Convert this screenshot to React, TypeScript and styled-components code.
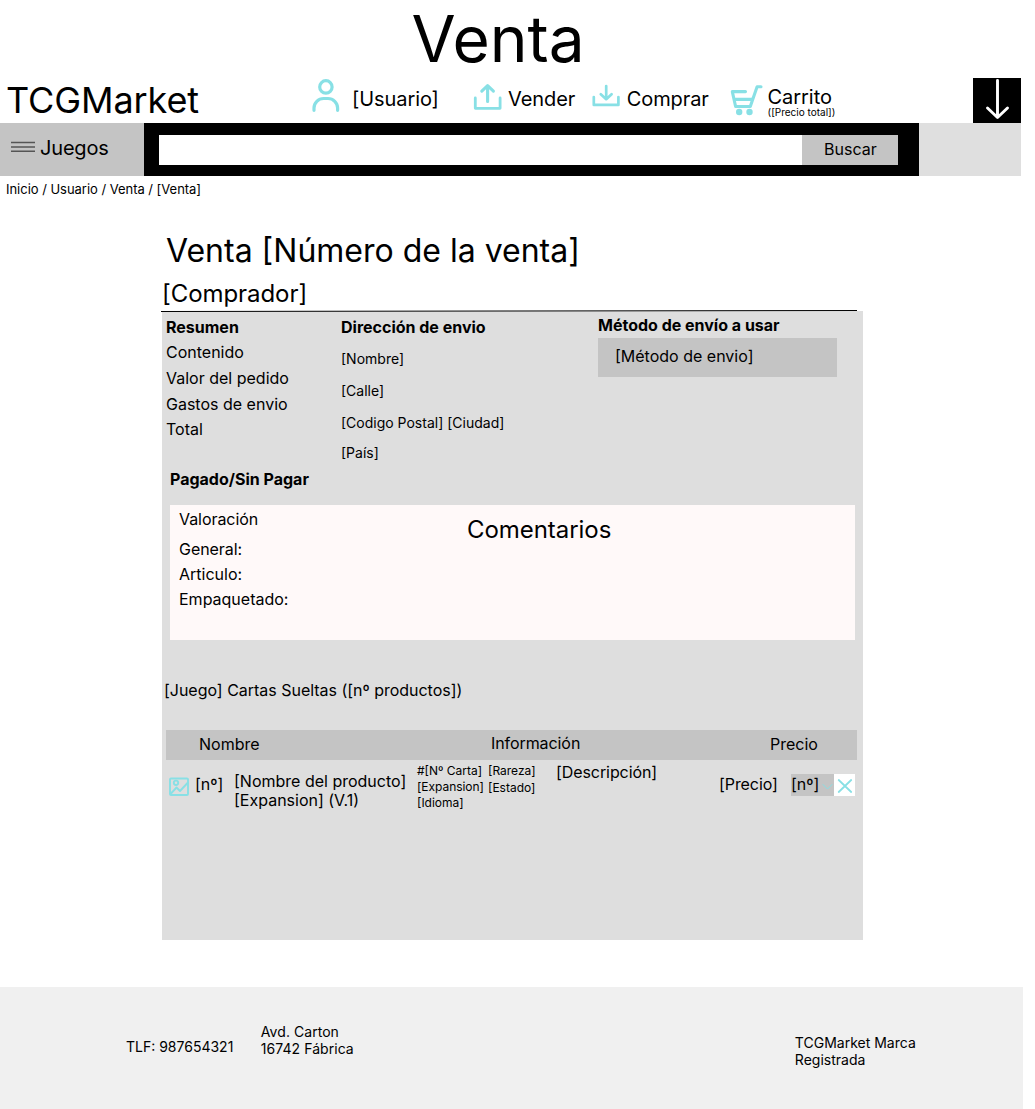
import React from "react";
import styled, { createGlobalStyle } from "styled-components";

const Global = createGlobalStyle`
  * { box-sizing: border-box; }
  body { margin: 0; background: #fff; overflow-x: hidden; }
`;

const Page = styled.div`
  width: 1035px;
  height: 1109px;
  display: flex;
  flex-direction: column;
  font-family: Inter, "Liberation Sans", sans-serif;
  color: #000;
  background: #fff;
  overflow: hidden;
`;

type LabelProps = {
  $size?: number;
  $line?: number;
  $left?: number;
  $top?: number;
  $bold?: boolean;
  $track?: number;
};

const Label = styled.div<LabelProps>`
  flex: none;
  white-space: pre;
  font-size: ${(p) => p.$size ?? 16}px;
  line-height: ${(p) => p.$line ?? 20}px;
  margin-left: ${(p) => p.$left ?? 0}px;
  margin-top: ${(p) => p.$top ?? 0}px;
  font-weight: ${(p) => (p.$bold ? 700 : 400)};
  letter-spacing: ${(p) => p.$track ?? 0}px;
`;

const Title = styled.h1`
  margin: 0;
  padding-left: 411.5px;
  height: 78px;
  font-size: 64px;
  font-weight: 400;
  line-height: 77px;
`;

const Header = styled.header`
  display: flex;
  height: 45px;
  width: 1021px;
`;

const Brand = styled.div`
  width: 312px;
  padding-left: 6px;
  font-size: 36px;
  line-height: 44px;
  letter-spacing: -0.1px;
`;

const NavItem = styled.div<{ $width: number }>`
  display: flex;
  align-items: flex-start;
  width: ${(p) => p.$width}px;
`;

const Icon = styled.svg<{ $top?: number }>`
  display: block;
  flex: none;
  margin-top: ${(p) => p.$top ?? 0}px;
  fill: none;
  stroke: #88e0e5;
  stroke-linecap: round;
  stroke-linejoin: round;
`;

const Stack = styled.div<{ $width?: number; $left?: number; $top?: number }>`
  display: flex;
  flex-direction: column;
  flex: none;
  width: ${(p) => (p.$width ? `${p.$width}px` : "auto")};
  margin-left: ${(p) => p.$left ?? 0}px;
  margin-top: ${(p) => p.$top ?? 0}px;
`;

const Download = styled.div`
  width: 48px;
  height: 45px;
  margin-left: auto;
  background: #000;
`;

const Bar = styled.div`
  display: flex;
  width: 1021px;
  height: 53px;
  background: #dfdfdf;
`;

const Games = styled.div`
  display: flex;
  width: 144px;
  padding-left: 11px;
  background: #c4c4c4;
`;

const Search = styled.div`
  display: flex;
  width: 775px;
  padding: 12px 21px 11px 15.4px;
  background: #000;
`;

const Field = styled.div`
  flex: 1;
  background: #fff;
`;

const SearchButton = styled.div`
  width: 96px;
  padding-left: 22px;
  background: #c4c4c4;
  font-size: 16px;
  line-height: 29px;
`;

const Main = styled.main`
  display: flex;
  flex-direction: column;
  height: 811px;
`;

const Rule = styled.svg`
  display: block;
  flex: none;
  margin: 1px 0 -1px 161px;
  position: relative;
`;

const Panel = styled.section`
  width: 701px;
  height: 629px;
  margin-left: 162px;
  background: #dedede;
`;

const Details = styled.div`
  display: flex;
  height: 194px;
`;

const Method = styled.div`
  width: 239px;
  height: 39px;
  margin-top: 3px;
  padding-left: 17px;
  background: #c4c4c4;
  line-height: 37px;
`;

const Comments = styled.div`
  display: flex;
  width: 685px;
  height: 135px;
  margin-left: 8px;
  background: #fff9f9;
`;

const TableHead = styled.div`
  display: flex;
  width: 691px;
  height: 30px;
  margin: 30px 0 0 4px;
  background: #c4c4c4;
`;

const Row = styled.div`
  display: flex;
  height: 60px;
  margin-left: 4px;
`;

const Quantity = styled.div`
  display: flex;
  width: 43px;
  height: 22px;
  margin-top: 14px;
  background: #c4c4c4;
`;

const Remove = styled.div`
  width: 21px;
  height: 22px;
  margin-top: 14px;
  background: #fff;
`;

const Footer = styled.footer`
  display: flex;
  width: 1023px;
  height: 122px;
  background: #f0f0f0;
`;

export default function App() {
  return (
    <Page>
      <Global />
      <Title>Venta</Title>
      <Header>
        <Brand>TCGMarket</Brand>
        <NavItem $width={161}>
          <Icon width="28" height="36" strokeWidth="3.2">
            <circle cx="13.9" cy="8.900" r="6.200" />
            <path d="M2 32.300v-2.300A9.600 9.600 0 0 1 11.600 20.500h4.400A9.600 9.600 0 0 1 25.600 30v2.300" />
          </Icon>
          <Label $size={20} $line={24} $left={12} $top={9} $track={-0.08}>[Usuario]</Label>
        </NavItem>
        <NavItem $width={119}>
          <Icon width="30" height="36" strokeWidth="2.800">
            <path d="M2.300 20v10.300h24.800V20" />
            <path d="M14.600 23.500V8M8.800 13.100 14.600 7.600l5.800 5.500" strokeWidth="3.1" />
          </Icon>
          <Label $size={20} $line={24} $left={5} $top={9} $track={-0.08}>Vender</Label>
        </NavItem>
        <NavItem $width={138}>
          <Icon width="30" height="36" strokeWidth="2.700">
            <path d="M1.800 19v7.900h24.600V19" />
            <path d="M14.200 8v13M8.800 16.200l5.400 5 5.400-5" />
          </Icon>
          <Label $size={20} $line={24} $left={4.7} $top={9} $track={-0.08}>Comprar</Label>
        </NavItem>
        <NavItem $width={120}>
          <Icon width="34" height="42" strokeWidth="3.1">
            <path d="M31 8.800h-3.900l-6.800 19.700H5.600L2.300 13.600h13.200M4.400 21.400h17.200" />
            <circle cx="9.200" cy="34" r="3.200" fill="#88e0e5" stroke="none" />
            <circle cx="19.500" cy="34" r="3.200" fill="#88e0e5" stroke="none" />
          </Icon>
          <Stack $left={3.5} $top={9}>
            <Label $size={20} $line={20} $track={-0.04}>Carrito</Label>
            <Label $size={10} $line={11}>([Precio total])</Label>
          </Stack>
        </NavItem>
        <Download>
          <svg width="48" height="45" fill="none" stroke="#fff" strokeWidth="2.900">
            <path d="M24.500 2.500V39M14.500 30l10 9.500 10-9.500" strokeLinecap="round" strokeLinejoin="round" />
          </svg>
        </Download>
      </Header>
      <Bar>
        <Games>
          <svg width="24" height="53" stroke="#555" strokeWidth="1.500">
            <path d="M0 19.500h24M0 24h24M0 28.300h24" />
          </svg>
          <Label $size={20} $line={24} $left={5} $top={13} $track={-0.18}>Juegos</Label>
        </Games>
        <Search>
          <Field />
          <SearchButton>Buscar</SearchButton>
        </Search>
      </Bar>
      <Main>
        <Label $size={13} $line={16} $left={6} $top={5} $track={-0.03}>Inicio / Usuario / Venta / [Venta]</Label>
        <Label $size={32} $line={40} $left={166} $top={34}>Venta [Número de la venta]</Label>
        <Label $size={24} $line={30} $left={162} $top={8} $track={-0.06}>[Comprador]</Label>
        <Rule width="696" height="2" stroke="#000" strokeWidth="1">
          <path d="M0 1.500 696 .5" />
        </Rule>
        <Panel>
          <Details>
            <Stack $width={175} $left={4} $top={6}>
              <Label $bold>Resumen</Label>
              <Label $top={5}>Contenido</Label>
              <Label $top={6}>Valor del pedido</Label>
              <Label $top={6}>Gastos de envio</Label>
              <Label $top={5}>Total</Label>
              <Label $bold $top={30} $left={4}>Pagado/Sin Pagar</Label>
            </Stack>
            <Stack $width={257} $top={6}>
              <Label $bold>Dirección de envio</Label>
              <Label $size={14} $top={12}>[Nombre]</Label>
              <Label $size={14} $top={12}>[Calle]</Label>
              <Label $size={14} $top={12}>[Codigo Postal] [Ciudad]</Label>
              <Label $size={14} $top={10}>[País]</Label>
            </Stack>
            <Stack $top={4}>
              <Label $bold>Método de envío a usar</Label>
              <Method>[Método de envio]</Method>
            </Stack>
          </Details>
          <Comments>
            <Stack $width={288} $left={9} $top={4}>
              <Label $track={-0.06}>Valoración</Label>
              <Label $top={10} $track={-0.06}>General:</Label>
              <Label $top={5}>Articulo:</Label>
              <Label $top={5}>Empaquetado:</Label>
            </Stack>
            <Label $size={24} $line={30} $top={10} $track={-0.05}>Comentarios</Label>
          </Comments>
          <Label $left={2} $top={40} $track={-0.02}>[Juego] Cartas Sueltas ([nº productos])</Label>
          <TableHead>
            <Stack $width={292} $left={33} $top={4}><Label>Nombre</Label></Stack>
            <Stack $width={279} $top={3}><Label $track={-0.08}>Información</Label></Stack>
            <Stack $top={4}><Label>Precio</Label></Stack>
          </TableHead>
          <Row>
            <Icon width="26" height="26" $top={14} strokeWidth="1.900">
              <rect x="4" y="4.500" width="18" height="16.500" rx="1" />
              <circle cx="10" cy="8.800" r="2.200" />
              <path d="m4.500 20 6-6.500 3.500 3.500 7.500-8" />
            </Icon>
            <Stack $width={39} $left={3} $top={14}><Label>[nº]</Label></Stack>
            <Stack $width={183} $top={12}>
              <Label $line={19}>[Nombre del producto]</Label>
              <Label $line={19}>[Expansion] (V.1)</Label>
            </Stack>
            <Stack $width={71} $top={3}>
              <Label $size={12} $line={16}>#[Nº Carta]</Label>
              <Label $size={12} $line={16} $track={-0.04}>[Expansion]</Label>
              <Label $size={12} $line={16}>[Idioma]</Label>
            </Stack>
            <Stack $width={68} $top={2}>
              <Label $size={12} $line={17}>[Rareza]</Label>
              <Label $size={12} $line={17}>[Estado]</Label>
            </Stack>
            <Stack $width={163} $top={2}><Label $track={-0.08}>[Descripción]</Label></Stack>
            <Stack $width={72} $top={14}><Label $track={-0.08}>[Precio]</Label></Stack>
            <Quantity>
              <Label>[nº]</Label>
              <Icon width="14" height="22" strokeWidth="1">
                <path d="m4 10.500 4.500 4.500 4.500-4.500" />
              </Icon>
            </Quantity>
            <Remove>
              <Icon width="21" height="22" strokeWidth="1.800">
                <path d="m4.700 6 12.500 12M17.200 6 4.700 18" />
              </Icon>
            </Remove>
          </Row>
        </Panel>
      </Main>
      <Footer>
        <Label $size={14} $left={126} $top={49.500}>TLF: 987654321</Label>
        <Stack $left={27.500} $width={534} $top={36}>
          <Label $size={14} $line={17} $track={0.05}>Avd. Carton</Label>
          <Label $size={14} $line={17} $track={0.05}>16742 Fábrica</Label>
        </Stack>
        <Stack $top={47}>
          <Label $size={14} $line={17}>TCGMarket Marca</Label>
          <Label $size={14} $line={17}>Registrada</Label>
        </Stack>
      </Footer>
    </Page>
  );
}
